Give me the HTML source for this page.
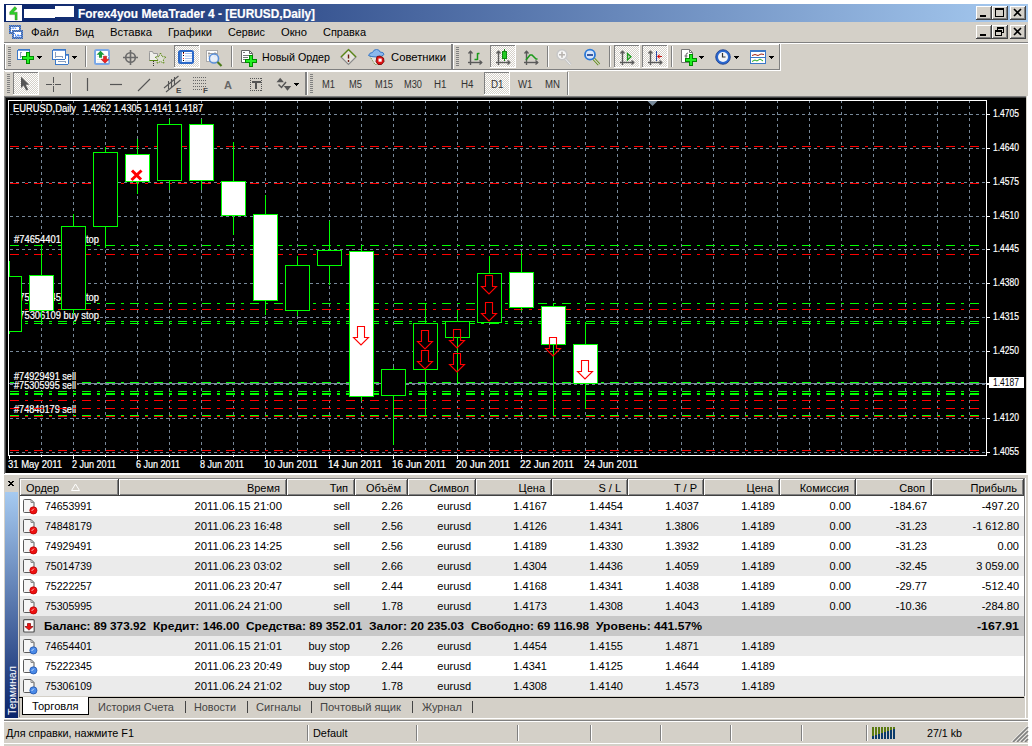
<!DOCTYPE html><html><head><meta charset="utf-8"><style>html,body{margin:0;padding:0;width:1032px;height:746px;overflow:hidden;background:#fff;font-family:"Liberation Sans",sans-serif}</style></head><body><svg width="1032" height="746" viewBox="0 0 1032 746" shape-rendering="crispEdges" font-family="Liberation Sans" style="position:absolute;left:0;top:0">
<defs>
<linearGradient id="tg" x1="0" y1="0" x2="1" y2="0"><stop offset="0" stop-color="#0a246a"/><stop offset="1" stop-color="#a6caf0"/></linearGradient>
<linearGradient id="vg" x1="0" y1="0" x2="0" y2="1"><stop offset="0" stop-color="#a6caf0"/><stop offset="1" stop-color="#0a246a"/></linearGradient>
<pattern id="dith" x="0" y="0" width="2" height="2" patternUnits="userSpaceOnUse"><rect width="2" height="2" fill="#d4d0c8"/><rect width="1" height="1" fill="#ffffff"/><rect x="1" y="1" width="1" height="1" fill="#ffffff"/></pattern>
<pattern id="chk" x="0" y="0" width="2" height="2" patternUnits="userSpaceOnUse"><rect width="2" height="2" fill="#4a8af8"/><rect width="1" height="1" fill="#5a6a80"/><rect x="1" y="1" width="1" height="1" fill="#5a6a80"/></pattern>
<style>text[fill="#ffffff"]{stroke:#fff;stroke-width:0.2}</style>
</defs>
<rect x="0" y="0" width="1032" height="746" fill="#ffffff" />
<rect x="4" y="22" width="1024" height="724" fill="#d4d0c8" />
<rect x="4" y="4" width="1024" height="18" fill="url(#tg)" />
<rect x="6" y="5" width="16" height="16" fill="#ffffff" />
<path d="M14.8,6.5 L17,8.7 L13.3,12.2 H17.2 V20 H15 V14.6 H9.7 V12 Z" fill="#2ad02a" stroke="#3a5a10" stroke-width="0.35" shape-rendering="auto"/>
<path d="M24,9 H55 V6 H74 V17 H55 V18 H24 Z" fill="#ffffff"/>
<text x="78" y="18" font-size="12.5" fill="#ffffff" font-weight="bold" textLength="237" lengthAdjust="spacingAndGlyphs" >Forex4you MetaTrader 4 - [EURUSD,Daily]</text>
<rect x="976" y="6" width="16" height="14" fill="#d4d0c8" />
<line x1="976" y1="6.5" x2="991" y2="6.5" stroke="#ffffff"/>
<line x1="976.5" y1="6" x2="976.5" y2="19" stroke="#ffffff"/>
<line x1="976" y1="19.5" x2="992" y2="19.5" stroke="#404040"/>
<line x1="991.5" y1="6" x2="991.5" y2="20" stroke="#404040"/>
<line x1="977" y1="18.5" x2="991" y2="18.5" stroke="#808080"/>
<line x1="990.5" y1="7" x2="990.5" y2="19" stroke="#808080"/>
<rect x="980" y="15" width="6" height="2" fill="#000" />
<rect x="992" y="6" width="16" height="14" fill="#d4d0c8" />
<line x1="992" y1="6.5" x2="1007" y2="6.5" stroke="#ffffff"/>
<line x1="992.5" y1="6" x2="992.5" y2="19" stroke="#ffffff"/>
<line x1="992" y1="19.5" x2="1008" y2="19.5" stroke="#404040"/>
<line x1="1007.5" y1="6" x2="1007.5" y2="20" stroke="#404040"/>
<line x1="993" y1="18.5" x2="1007" y2="18.5" stroke="#808080"/>
<line x1="1006.5" y1="7" x2="1006.5" y2="19" stroke="#808080"/>
<rect x="995.5" y="8.5" width="8" height="8" fill="none" stroke="#000"/>
<rect x="995" y="8" width="9" height="2" fill="#000" />
<rect x="1010" y="6" width="16" height="14" fill="#d4d0c8" />
<line x1="1010" y1="6.5" x2="1025" y2="6.5" stroke="#ffffff"/>
<line x1="1010.5" y1="6" x2="1010.5" y2="19" stroke="#ffffff"/>
<line x1="1010" y1="19.5" x2="1026" y2="19.5" stroke="#404040"/>
<line x1="1025.5" y1="6" x2="1025.5" y2="20" stroke="#404040"/>
<line x1="1011" y1="18.5" x2="1025" y2="18.5" stroke="#808080"/>
<line x1="1024.5" y1="7" x2="1024.5" y2="19" stroke="#808080"/>
<path d="M1014,9 L1021,16 M1021,9 L1014,16" stroke="#000" stroke-width="1.6" shape-rendering="auto"/>
<rect x="976" y="25" width="16" height="14" fill="#d4d0c8" />
<line x1="976" y1="25.5" x2="991" y2="25.5" stroke="#ffffff"/>
<line x1="976.5" y1="25" x2="976.5" y2="38" stroke="#ffffff"/>
<line x1="976" y1="38.5" x2="992" y2="38.5" stroke="#404040"/>
<line x1="991.5" y1="25" x2="991.5" y2="39" stroke="#404040"/>
<line x1="977" y1="37.5" x2="991" y2="37.5" stroke="#808080"/>
<line x1="990.5" y1="26" x2="990.5" y2="38" stroke="#808080"/>
<rect x="980" y="34" width="6" height="2" fill="#000" />
<rect x="992" y="25" width="16" height="14" fill="#d4d0c8" />
<line x1="992" y1="25.5" x2="1007" y2="25.5" stroke="#ffffff"/>
<line x1="992.5" y1="25" x2="992.5" y2="38" stroke="#ffffff"/>
<line x1="992" y1="38.5" x2="1008" y2="38.5" stroke="#404040"/>
<line x1="1007.5" y1="25" x2="1007.5" y2="39" stroke="#404040"/>
<line x1="993" y1="37.5" x2="1007" y2="37.5" stroke="#808080"/>
<line x1="1006.5" y1="26" x2="1006.5" y2="38" stroke="#808080"/>
<rect x="997.5" y="27.5" width="6" height="5" fill="none" stroke="#000"/>
<rect x="997" y="27" width="7" height="2" fill="#000" />
<rect x="995" y="30" width="7" height="6" fill="#d4d0c8" />
<rect x="995.5" y="30.5" width="6" height="5" fill="none" stroke="#000"/>
<rect x="995" y="30" width="7" height="2" fill="#000" />
<rect x="1010" y="25" width="16" height="14" fill="#d4d0c8" />
<line x1="1010" y1="25.5" x2="1025" y2="25.5" stroke="#ffffff"/>
<line x1="1010.5" y1="25" x2="1010.5" y2="38" stroke="#ffffff"/>
<line x1="1010" y1="38.5" x2="1026" y2="38.5" stroke="#404040"/>
<line x1="1025.5" y1="25" x2="1025.5" y2="39" stroke="#404040"/>
<line x1="1011" y1="37.5" x2="1025" y2="37.5" stroke="#808080"/>
<line x1="1024.5" y1="26" x2="1024.5" y2="38" stroke="#808080"/>
<path d="M1014,28 L1021,35 M1021,28 L1014,35" stroke="#000" stroke-width="1.6" shape-rendering="auto"/>
<rect x="9" y="25" width="12" height="9" fill="url(#chk)" />
<rect x="11" y="27" width="8" height="5" fill="#ffffff" />
<rect x="12" y="30" width="11" height="9" fill="url(#chk)" />
<rect x="14" y="32" width="7" height="5" fill="#ffffff" />
<g shape-rendering="auto"><path d="M14,33 l1.5,1.5 v1.5 l1,1 1.5,-2.5 1,2 1.2,-1.5 1,1.5" stroke="#4a8af8" fill="none" stroke-width="1"/><path d="M11.5,29 l1.5,-1.5 1,1.5 M15,27.5 l1,1.5" stroke="#4a8af8" fill="none"/></g>
<text x="31" y="36" font-size="11" fill="#000" textLength="28" lengthAdjust="spacingAndGlyphs" >Файл</text>
<text x="75" y="36" font-size="11" fill="#000" textLength="19" lengthAdjust="spacingAndGlyphs" >Вид</text>
<text x="110" y="36" font-size="11" fill="#000" textLength="42" lengthAdjust="spacingAndGlyphs" >Вставка</text>
<text x="168" y="36" font-size="11" fill="#000" textLength="44" lengthAdjust="spacingAndGlyphs" >Графики</text>
<text x="228" y="36" font-size="11" fill="#000" textLength="37" lengthAdjust="spacingAndGlyphs" >Сервис</text>
<text x="281" y="36" font-size="11" fill="#000" textLength="26" lengthAdjust="spacingAndGlyphs" >Окно</text>
<text x="323" y="36" font-size="11" fill="#000" textLength="43" lengthAdjust="spacingAndGlyphs" >Справка</text>
<line x1="4" y1="42.5" x2="1028" y2="42.5" stroke="#808080"/>
<line x1="4" y1="43.5" x2="1028" y2="43.5" stroke="#ffffff"/>
<rect x="4" y="44" width="1024" height="25" fill="#d4d0c8" />
<line x1="5" y1="44.5" x2="451" y2="44.5" stroke="#ffffff"/>
<line x1="4.5" y1="44" x2="4.5" y2="70" stroke="#808080"/>
<line x1="5.5" y1="44" x2="5.5" y2="69" stroke="#ffffff"/>
<line x1="4" y1="69.5" x2="453" y2="69.5" stroke="#808080"/>
<line x1="451.5" y1="44" x2="451.5" y2="70" stroke="#808080"/>
<line x1="452.5" y1="44" x2="452.5" y2="70" stroke="#808080"/>
<line x1="453" y1="44.5" x2="780" y2="44.5" stroke="#ffffff"/>
<line x1="453.5" y1="44" x2="453.5" y2="69" stroke="#ffffff"/>
<line x1="453" y1="69.5" x2="780" y2="69.5" stroke="#808080"/>
<line x1="779.5" y1="44" x2="779.5" y2="70" stroke="#808080"/>
<line x1="780.5" y1="44" x2="780.5" y2="71" stroke="#ffffff"/>
<line x1="4" y1="70.5" x2="781" y2="70.5" stroke="#ffffff"/>
<rect x="8" y="47" width="3" height="1" fill="#808080" />
<rect x="8" y="49" width="3" height="1" fill="#808080" />
<rect x="8" y="51" width="3" height="1" fill="#808080" />
<rect x="8" y="53" width="3" height="1" fill="#808080" />
<rect x="8" y="55" width="3" height="1" fill="#808080" />
<rect x="8" y="57" width="3" height="1" fill="#808080" />
<rect x="8" y="59" width="3" height="1" fill="#808080" />
<rect x="8" y="61" width="3" height="1" fill="#808080" />
<rect x="8" y="63" width="3" height="1" fill="#808080" />
<rect x="8" y="65" width="3" height="1" fill="#808080" />
<rect x="17.5" y="49.5" width="12" height="10" rx="1.5" fill="#fff" stroke="#3a78c8"/>
<rect x="18" y="50" width="11" height="1" fill="#6a9ae0" />
<path d="M20.5,51.5 v6 M19.5,52.5 h2 M19.5,56.5 h2" stroke="#8aa0c0" fill="none"/>
<rect x="26" y="52" width="4" height="12" fill="#008a00" />
<rect x="22" y="56" width="12" height="4" fill="#008a00" />
<rect x="27" y="53" width="2" height="10" fill="#22ee22" />
<rect x="23" y="57" width="10" height="2" fill="#22ee22" />
<rect x="37" y="56" width="5" height="1" fill="#000" />
<rect x="38" y="57" width="3" height="1" fill="#000" />
<rect x="39" y="58" width="1" height="1" fill="#000" />
<rect x="55.5" y="54.5" width="13" height="10" rx="1.5" fill="#fff" stroke="#3a78c8"/>
<rect x="56" y="55" width="12" height="1" fill="#6a9ae0" />
<rect x="52.5" y="49.5" width="13" height="10" rx="1.5" fill="#fff" stroke="#3a78c8"/>
<rect x="53" y="50" width="12" height="1" fill="#6a9ae0" />
<path d="M55.5,51.5 v6 M55,56.5 h8 M62.5,55.5 v2 M58,61.5 h8 M65.5,60.5 v2" stroke="#8aa0c0" fill="none"/>
<rect x="72" y="56" width="5" height="1" fill="#000" />
<rect x="73" y="57" width="3" height="1" fill="#000" />
<rect x="74" y="58" width="1" height="1" fill="#000" />
<line x1="85.5" y1="46" x2="85.5" y2="67" stroke="#808080"/>
<line x1="86.5" y1="46" x2="86.5" y2="67" stroke="#ffffff"/>
<g shape-rendering="auto">
<rect x="95" y="50" width="14" height="14" rx="1.5" fill="#fff" stroke="#7aa8e8" stroke-width="2"/><path d="M97,56.5 h12 M97,59.5 h12 M97,62 h12" stroke="#e4e8ec"/><path d="M100.5,50.8 l-4,4 h2.5 v3 h3 v-3 h2.5 z" fill="#1a9a3a"/><path d="M105,63.2 l4,-4 h-2.5 v-3 h-3 v3 h-2.5 z" fill="#ee2020" stroke="#a01010" stroke-width="0.5"/>
<circle cx="130.5" cy="57.5" r="4.8" fill="none" stroke="#6a6a6a" stroke-width="1.6"/><path d="M130.5,50 v15 M123,57.5 h15" stroke="#6a6a6a" stroke-width="1.6"/>
<path d="M149.5,52.5 v8 h8 v-7 h-4 l-1,-2 h-3 z" fill="#eeeeea" stroke="#999"/><path d="M149.5,60.5 h8" stroke="#5a8a10"/><path d="M160.5,53 l1.7,3.6 3.8,0.4 -2.8,2.6 0.8,3.8 -3.5,-2 -3.5,2 0.8,-3.8 -2.8,-2.6 3.8,-0.4 z" fill="#e0e0d8" stroke="#5a8a10" stroke-dasharray="1.2 0.8"/><path d="M153.5,61 v5" stroke="#333" stroke-dasharray="1 1"/>
</g>
<rect x="174" y="45" width="26" height="23" fill="url(#dith)"/>
<line x1="174" y1="45.5" x2="200" y2="45.5" stroke="#808080"/>
<line x1="174.5" y1="45" x2="174.5" y2="68" stroke="#808080"/>
<line x1="174" y1="67.5" x2="200" y2="67.5" stroke="#ffffff"/>
<line x1="199.5" y1="45" x2="199.5" y2="68" stroke="#ffffff"/>
<g shape-rendering="auto"><rect x="179" y="51" width="14" height="12" rx="1.5" fill="#fff" stroke="#2a68c8" stroke-width="2"/><rect x="180" y="52" width="2" height="10" fill="#5a8fd8"/><path d="M185,53.5 h7 M185,56 h7 M185,58.5 h7 M185,61 h7" stroke="#a8c4f0"/></g>
<rect x="183" y="52" width="1" height="1" fill="#000" />
<rect x="183" y="53" width="1" height="1" fill="#e02020" />
<rect x="183" y="55" width="1" height="1" fill="#000" />
<rect x="183" y="58" width="1" height="1" fill="#e02020" />
<rect x="183" y="60" width="1" height="1" fill="#000" />
<g shape-rendering="auto">
<rect x="206.5" y="50.5" width="11" height="11" fill="#fff" stroke="#aaa"/><path d="M209,52 v5 M215,52 v5 M208,53.5 h9" stroke="#888" stroke-width="0.8"/><circle cx="214" cy="58.5" r="4.6" fill="#e4ecf8" fill-opacity="0.85" stroke="#5a8fd8" stroke-width="1.5"/><path d="M217.5,62 l4,4" stroke="#4a7a1a" stroke-width="2.2"/>
</g>
<line x1="231.5" y1="46" x2="231.5" y2="67" stroke="#808080"/>
<line x1="232.5" y1="46" x2="232.5" y2="67" stroke="#ffffff"/>
<g shape-rendering="auto">
<path d="M241.5,50.5 h8 l3,3 v9 h-11 z" fill="#fff" stroke="#666" stroke-linejoin="round"/><path d="M249.5,50.5 v3 h3" fill="none" stroke="#666"/><path d="M243,52.5 h2 M243,55.5 h6 M243,57.5 h5 M243,59.5 h3" stroke="#777"/>
</g>
<rect x="249" y="55" width="4" height="12" fill="#008a00" />
<rect x="245" y="59" width="12" height="4" fill="#008a00" />
<rect x="250" y="56" width="2" height="10" fill="#22ee22" />
<rect x="246" y="60" width="10" height="2" fill="#22ee22" />
<text x="262" y="61" font-size="11" fill="#000" textLength="68" lengthAdjust="spacingAndGlyphs" >Новый Ордер</text>
<g shape-rendering="auto">
<path d="M348.5,49.5 L356,57 L348.5,64.5 L341,57 Z" fill="#e6e4de" stroke="#8a8a8a" stroke-width="1.2"/><path d="M341,57 L348.5,49.5 L356,57" fill="none" stroke="#5a8a10" stroke-width="1.2"/><path d="M348.5,54.5 v4" stroke="#6a1a10" stroke-width="1.4"/><path d="M348.5,60 v2" stroke="#6a1a10" stroke-width="1.4"/>
<path d="M370,56.5 h12 l-5,8 h-2 z" fill="#e4e4e0" stroke="#6a8a30" stroke-dasharray="1 1"/><path d="M368.5,55.5 q1,-3 4,-3 q1,-3 4,-3 q3,0 3.5,2.5 q4,0 4,2.5 q-2,2.5 -7,2.5 q-6,0 -8.5,-1.5 z" fill="#8ab8ec" stroke="#3a78c8"/><path d="M377,56.5 l3,-0.5 3.5,2 0.5,3.5 -2.5,3 -3.5,0 -2,-3 z" fill="#e01010" stroke="#801010"/><rect x="378.5" y="58.5" width="3.2" height="3.2" fill="#fff"/>
</g>
<text x="391" y="61" font-size="11" fill="#000" textLength="55" lengthAdjust="spacingAndGlyphs" >Советники</text>
<rect x="456" y="47" width="3" height="1" fill="#808080" />
<rect x="456" y="49" width="3" height="1" fill="#808080" />
<rect x="456" y="51" width="3" height="1" fill="#808080" />
<rect x="456" y="53" width="3" height="1" fill="#808080" />
<rect x="456" y="55" width="3" height="1" fill="#808080" />
<rect x="456" y="57" width="3" height="1" fill="#808080" />
<rect x="456" y="59" width="3" height="1" fill="#808080" />
<rect x="456" y="61" width="3" height="1" fill="#808080" />
<rect x="456" y="63" width="3" height="1" fill="#808080" />
<rect x="456" y="65" width="3" height="1" fill="#808080" />
<g shape-rendering="auto" stroke="#5a5a5a" fill="none" stroke-width="1.4"><path d="M470.5,51 V65"/><path d="M468,62.5 H482"/><path d="M468.5,53.5 l2,-2.2 2,2.2 M479.5,60.5 l2.2,2 -2.2,2"/></g>
<path d="M477.5,53 v7 M477.5,53.5 h2 M474.5,59.5 h3" stroke="#1a9a1a" stroke-width="1.5" fill="none" shape-rendering="auto"/>
<rect x="490" y="45" width="26" height="23" fill="url(#dith)"/>
<line x1="490" y1="45.5" x2="516" y2="45.5" stroke="#808080"/>
<line x1="490.5" y1="45" x2="490.5" y2="68" stroke="#808080"/>
<line x1="490" y1="67.5" x2="516" y2="67.5" stroke="#ffffff"/>
<line x1="515.5" y1="45" x2="515.5" y2="68" stroke="#ffffff"/>
<g shape-rendering="auto" stroke="#5a5a5a" fill="none" stroke-width="1.4"><path d="M498.5,51 V65"/><path d="M496,62.5 H510"/><path d="M496.5,53.5 l2,-2.2 2,2.2 M507.5,60.5 l2.2,2 -2.2,2"/></g>
<path d="M504.5,49 v12" stroke="#118811" stroke-width="1.2"/><rect x="502.5" y="51.5" width="4" height="7" fill="#22cc22" stroke="#118811"/>
<g shape-rendering="auto" stroke="#5a5a5a" fill="none" stroke-width="1.4"><path d="M526.5,51 V65"/><path d="M524,62.5 H538"/><path d="M524.5,53.5 l2,-2.2 2,2.2 M535.5,60.5 l2.2,2 -2.2,2"/></g>
<path d="M526,60 l4,-5 h2 l4,4 h1.5" stroke="#1a9a1a" stroke-width="1.5" fill="none" shape-rendering="auto"/>
<line x1="547.5" y1="46" x2="547.5" y2="67" stroke="#808080"/>
<line x1="548.5" y1="46" x2="548.5" y2="67" stroke="#ffffff"/>
<g shape-rendering="auto">
<path d="M565,58.5 l5.5,6" stroke="#c8c8c8" stroke-width="3"/><path d="M565,58.5 l5.5,6" stroke="#f0f0f0" stroke-width="1"/><circle cx="562" cy="54.7" r="5" fill="#f6f6f6" stroke="#c8c8c8" stroke-width="1.6"/><path d="M559,54.7 h6 M562,51.7 v6" stroke="#b8b4b0" stroke-width="1.6"/>
<path d="M593.5,58.5 l5.5,6" stroke="#5a8a10" stroke-width="3"/><path d="M593.5,58.5 l5.5,6" stroke="#d4d0c8" stroke-width="1.2"/><circle cx="590" cy="54.7" r="5" fill="#d8e6fa" stroke="#2a78d8" stroke-width="1.8"/><path d="M587,55 h6" stroke="#3a5aa0" stroke-width="2"/>
</g>
<line x1="609.5" y1="46" x2="609.5" y2="67" stroke="#808080"/>
<line x1="610.5" y1="46" x2="610.5" y2="67" stroke="#ffffff"/>
<rect x="614" y="45" width="26" height="23" fill="url(#dith)"/>
<line x1="614" y1="45.5" x2="640" y2="45.5" stroke="#808080"/>
<line x1="614.5" y1="45" x2="614.5" y2="68" stroke="#808080"/>
<line x1="614" y1="67.5" x2="640" y2="67.5" stroke="#ffffff"/>
<line x1="639.5" y1="45" x2="639.5" y2="68" stroke="#ffffff"/>
<rect x="642" y="45" width="26" height="23" fill="url(#dith)"/>
<line x1="642" y1="45.5" x2="668" y2="45.5" stroke="#808080"/>
<line x1="642.5" y1="45" x2="642.5" y2="68" stroke="#808080"/>
<line x1="642" y1="67.5" x2="668" y2="67.5" stroke="#ffffff"/>
<line x1="667.5" y1="45" x2="667.5" y2="68" stroke="#ffffff"/>
<g shape-rendering="auto" stroke="#5a5a5a" fill="none" stroke-width="1.4"><path d="M622.5,51 V65"/><path d="M620,62.5 H634"/><path d="M620.5,53.5 l2,-2.2 2,2.2 M631.5,60.5 l2.2,2 -2.2,2"/></g>
<path d="M627.5,53.5 v6.5 l3.5,-3.2 z" fill="#d8d8d0" stroke="#1a9a1a" stroke-width="1.3" shape-rendering="auto"/>
<g shape-rendering="auto" stroke="#5a5a5a" fill="none" stroke-width="1.4"><path d="M650.5,51 V65"/><path d="M648,62.5 H662"/><path d="M648.5,53.5 l2,-2.2 2,2.2 M659.5,60.5 l2.2,2 -2.2,2"/></g>
<path d="M656.5,51 v10" stroke="#2a4aa8" stroke-width="1.4"/><path d="M662,56.5 h-4" stroke="#c01010" stroke-width="1.4"/><path d="M657,56.5 l2.5,-2.5 v5 z" fill="#e01010" shape-rendering="auto"/>
<line x1="671.5" y1="46" x2="671.5" y2="67" stroke="#808080"/>
<line x1="672.5" y1="46" x2="672.5" y2="67" stroke="#ffffff"/>
<g shape-rendering="auto">
<path d="M681.5,49.5 h8 l3,3 v10 h-11 z" fill="#fff" stroke="#777"/><path d="M689.5,49.5 v3 h3" fill="none" stroke="#777"/><path d="M686,60 v-5 q0,-2 2,-2 M684.5,56 h3" stroke="#666" fill="none"/>
<circle cx="723" cy="57" r="7.3" fill="#2a68d0" stroke="#1a3a88" stroke-width="0.8"/><circle cx="723" cy="57" r="5" fill="#f2f4f8"/><path d="M722.5,53 v4 h3" stroke="#333" stroke-width="1.2" fill="none"/>
</g>
<rect x="750" y="50" width="16" height="14" fill="#3a78c8" />
<rect x="751" y="52" width="14" height="5" fill="#fff" />
<rect x="751" y="58" width="14" height="5" fill="#fff" />
<g shape-rendering="auto"><path d="M752,55.5 l3,-1 3,1 3,-1.5 3,0.5" stroke="#a02010" fill="none"/><path d="M752,61.5 l3,-1.5 2,1 3,-2 3,2" stroke="#22aa22" fill="none"/></g>
<rect x="689" y="54" width="4" height="12" fill="#008a00" />
<rect x="685" y="58" width="12" height="4" fill="#008a00" />
<rect x="690" y="55" width="2" height="10" fill="#22ee22" />
<rect x="686" y="59" width="10" height="2" fill="#22ee22" />
<rect x="699" y="56" width="5" height="1" fill="#000" />
<rect x="700" y="57" width="3" height="1" fill="#000" />
<rect x="701" y="58" width="1" height="1" fill="#000" />
<rect x="734" y="56" width="5" height="1" fill="#000" />
<rect x="735" y="57" width="3" height="1" fill="#000" />
<rect x="736" y="58" width="1" height="1" fill="#000" />
<rect x="769" y="56" width="5" height="1" fill="#000" />
<rect x="770" y="57" width="3" height="1" fill="#000" />
<rect x="771" y="58" width="1" height="1" fill="#000" />
<rect x="4" y="71" width="1024" height="25" fill="#d4d0c8" />
<line x1="5" y1="71.5" x2="306" y2="71.5" stroke="#ffffff"/>
<line x1="306" y1="71.5" x2="567" y2="71.5" stroke="#ffffff"/>
<rect x="7" y="74" width="3" height="1" fill="#808080" />
<rect x="7" y="76" width="3" height="1" fill="#808080" />
<rect x="7" y="78" width="3" height="1" fill="#808080" />
<rect x="7" y="80" width="3" height="1" fill="#808080" />
<rect x="7" y="82" width="3" height="1" fill="#808080" />
<rect x="7" y="84" width="3" height="1" fill="#808080" />
<rect x="7" y="86" width="3" height="1" fill="#808080" />
<rect x="7" y="88" width="3" height="1" fill="#808080" />
<rect x="7" y="90" width="3" height="1" fill="#808080" />
<rect x="7" y="92" width="3" height="1" fill="#808080" />
<rect x="13" y="72" width="26" height="23" fill="url(#dith)"/>
<line x1="13" y1="72.5" x2="39" y2="72.5" stroke="#808080"/>
<line x1="13.5" y1="72" x2="13.5" y2="95" stroke="#808080"/>
<line x1="13" y1="94.5" x2="39" y2="94.5" stroke="#ffffff"/>
<line x1="38.5" y1="72" x2="38.5" y2="95" stroke="#ffffff"/>
<g shape-rendering="auto">
<path d="M21,76.8 V88 l2.6,-2.4 2.6,5 2,-1 -2.5,-4.8 h3.5 z" fill="#555"/>
</g>
<rect x="53" y="77" width="1" height="6" fill="#555" />
<rect x="53" y="86" width="1" height="6" fill="#555" />
<rect x="46" y="84" width="6" height="1" fill="#555" />
<rect x="55" y="84" width="6" height="1" fill="#555" />
<rect x="53" y="84" width="1" height="1" fill="#555" />
<g shape-rendering="auto" opacity="0.6"><path d="M53.5,77 v6 M53.5,86 v6 M46,84.5 h6 M55,84.5 h6" stroke="#555" stroke-width="0.6"/></g>
<line x1="70.5" y1="73" x2="70.5" y2="94" stroke="#808080"/>
<line x1="71.5" y1="73" x2="71.5" y2="94" stroke="#ffffff"/>
<g shape-rendering="auto">
<path d="M87.5,78 v13" stroke="#555" stroke-width="1.2"/><path d="M110,84.5 h12" stroke="#555" stroke-width="1.2"/><path d="M138,91 l12,-12" stroke="#555" stroke-width="1.1"/>
<path d="M164,88 L178.5,76 M166,92 L180.5,80 M168.5,81 v8 M171.5,79 v8 M174.5,77 v8" stroke="#555" stroke-width="1.1" fill="none"/>
</g>
<rect x="193" y="77" width="1" height="1" fill="#666" />
<rect x="195" y="77" width="1" height="1" fill="#666" />
<rect x="197" y="77" width="1" height="1" fill="#666" />
<rect x="199" y="77" width="1" height="1" fill="#666" />
<rect x="201" y="77" width="1" height="1" fill="#666" />
<rect x="203" y="77" width="1" height="1" fill="#666" />
<rect x="205" y="77" width="1" height="1" fill="#666" />
<rect x="193" y="80" width="1" height="1" fill="#666" />
<rect x="195" y="80" width="1" height="1" fill="#666" />
<rect x="197" y="80" width="1" height="1" fill="#666" />
<rect x="199" y="80" width="1" height="1" fill="#666" />
<rect x="201" y="80" width="1" height="1" fill="#666" />
<rect x="203" y="80" width="1" height="1" fill="#666" />
<rect x="205" y="80" width="1" height="1" fill="#666" />
<rect x="193" y="83" width="1" height="1" fill="#666" />
<rect x="195" y="83" width="1" height="1" fill="#666" />
<rect x="197" y="83" width="1" height="1" fill="#666" />
<rect x="199" y="83" width="1" height="1" fill="#666" />
<rect x="201" y="83" width="1" height="1" fill="#666" />
<rect x="203" y="83" width="1" height="1" fill="#666" />
<rect x="205" y="83" width="1" height="1" fill="#666" />
<rect x="193" y="86" width="1" height="1" fill="#666" />
<rect x="195" y="86" width="1" height="1" fill="#666" />
<rect x="197" y="86" width="1" height="1" fill="#666" />
<rect x="199" y="86" width="1" height="1" fill="#666" />
<rect x="201" y="86" width="1" height="1" fill="#666" />
<rect x="203" y="86" width="1" height="1" fill="#666" />
<rect x="205" y="86" width="1" height="1" fill="#666" />
<rect x="193" y="89" width="1" height="1" fill="#666" />
<rect x="195" y="89" width="1" height="1" fill="#666" />
<rect x="197" y="89" width="1" height="1" fill="#666" />
<rect x="199" y="89" width="1" height="1" fill="#666" />
<rect x="201" y="89" width="1" height="1" fill="#666" />
<text x="176" y="93" font-size="8" fill="#444" font-weight="bold" >E</text>
<text x="203" y="93" font-size="8" fill="#444" font-weight="bold" >F</text>
<text x="224" y="89" font-size="11" fill="#666" font-weight="bold" >A</text>
<rect x="250" y="78" width="1" height="1" fill="#555" />
<rect x="250" y="90" width="1" height="1" fill="#555" />
<rect x="252" y="78" width="1" height="1" fill="#555" />
<rect x="252" y="90" width="1" height="1" fill="#555" />
<rect x="254" y="78" width="1" height="1" fill="#555" />
<rect x="254" y="90" width="1" height="1" fill="#555" />
<rect x="256" y="78" width="1" height="1" fill="#555" />
<rect x="256" y="90" width="1" height="1" fill="#555" />
<rect x="258" y="78" width="1" height="1" fill="#555" />
<rect x="258" y="90" width="1" height="1" fill="#555" />
<rect x="260" y="78" width="1" height="1" fill="#555" />
<rect x="260" y="90" width="1" height="1" fill="#555" />
<rect x="250" y="78" width="1" height="1" fill="#555" />
<rect x="261" y="78" width="1" height="1" fill="#555" />
<rect x="250" y="80" width="1" height="1" fill="#555" />
<rect x="261" y="80" width="1" height="1" fill="#555" />
<rect x="250" y="82" width="1" height="1" fill="#555" />
<rect x="261" y="82" width="1" height="1" fill="#555" />
<rect x="250" y="84" width="1" height="1" fill="#555" />
<rect x="261" y="84" width="1" height="1" fill="#555" />
<rect x="250" y="86" width="1" height="1" fill="#555" />
<rect x="261" y="86" width="1" height="1" fill="#555" />
<rect x="250" y="88" width="1" height="1" fill="#555" />
<rect x="261" y="88" width="1" height="1" fill="#555" />
<rect x="250" y="90" width="1" height="1" fill="#555" />
<rect x="261" y="90" width="1" height="1" fill="#555" />
<rect x="252" y="81" width="9" height="2" fill="#555" />
<rect x="255" y="81" width="2" height="8" fill="#555" />
<g shape-rendering="auto" fill="#555"><path d="M276.5,82.2 l3.7,-4.4 3.7,4.4 z"/><path d="M283.8,86 h7.4 l-3.7,4.7 z"/><path d="M278.5,84.5 l3,3 4.5,-5.5" stroke="#555" stroke-width="1.5" fill="none"/></g>
<rect x="294" y="83" width="5" height="1" fill="#000" />
<rect x="295" y="84" width="3" height="1" fill="#000" />
<rect x="296" y="85" width="1" height="1" fill="#000" />
<line x1="305.5" y1="72" x2="305.5" y2="95" stroke="#808080"/>
<line x1="306.5" y1="72" x2="306.5" y2="95" stroke="#808080"/>
<line x1="307.5" y1="72" x2="307.5" y2="95" stroke="#ffffff"/>
<rect x="310" y="74" width="3" height="1" fill="#808080" />
<rect x="310" y="76" width="3" height="1" fill="#808080" />
<rect x="310" y="78" width="3" height="1" fill="#808080" />
<rect x="310" y="80" width="3" height="1" fill="#808080" />
<rect x="310" y="82" width="3" height="1" fill="#808080" />
<rect x="310" y="84" width="3" height="1" fill="#808080" />
<rect x="310" y="86" width="3" height="1" fill="#808080" />
<rect x="310" y="88" width="3" height="1" fill="#808080" />
<rect x="310" y="90" width="3" height="1" fill="#808080" />
<rect x="310" y="92" width="3" height="1" fill="#808080" />
<rect x="484" y="72" width="26" height="23" fill="url(#dith)"/>
<line x1="484" y1="72.5" x2="510" y2="72.5" stroke="#808080"/>
<line x1="484.5" y1="72" x2="484.5" y2="95" stroke="#808080"/>
<line x1="484" y1="94.5" x2="510" y2="94.5" stroke="#ffffff"/>
<line x1="509.5" y1="72" x2="509.5" y2="95" stroke="#ffffff"/>
<text x="322" y="88" font-size="10" fill="#333" textLength="13" lengthAdjust="spacingAndGlyphs" >M1</text>
<text x="349" y="88" font-size="10" fill="#333" textLength="13" lengthAdjust="spacingAndGlyphs" >M5</text>
<text x="375" y="88" font-size="10" fill="#333" textLength="18" lengthAdjust="spacingAndGlyphs" >M15</text>
<text x="404" y="88" font-size="10" fill="#333" textLength="18" lengthAdjust="spacingAndGlyphs" >M30</text>
<text x="434" y="88" font-size="10" fill="#333" textLength="12.5" lengthAdjust="spacingAndGlyphs" >H1</text>
<text x="461" y="88" font-size="10" fill="#333" textLength="12.5" lengthAdjust="spacingAndGlyphs" >H4</text>
<text x="491" y="88" font-size="10" fill="#333" textLength="12.5" lengthAdjust="spacingAndGlyphs" >D1</text>
<text x="518" y="88" font-size="10" fill="#333" textLength="14.5" lengthAdjust="spacingAndGlyphs" >W1</text>
<text x="545" y="88" font-size="10" fill="#333" textLength="15" lengthAdjust="spacingAndGlyphs" >MN</text>
<line x1="567.5" y1="72" x2="567.5" y2="95" stroke="#808080"/>
<line x1="568.5" y1="72" x2="568.5" y2="95" stroke="#ffffff"/>
<rect x="4" y="96" width="1023" height="1" fill="#808080" />
<rect x="4" y="96" width="1" height="378" fill="#808080" />
<rect x="5" y="97" width="1021" height="376" fill="#000" />
<rect x="5" y="97" width="1021" height="1" fill="#404040" />
<rect x="5" y="97" width="1" height="376" fill="#404040" />
<rect x="1026" y="96" width="1" height="378" fill="#d4d0c8" />
<rect x="1027" y="96" width="1" height="378" fill="#ffffff" />
<rect x="4" y="473" width="1024" height="2" fill="#ffffff" />
<rect x="4" y="473" width="1" height="1" fill="#808080" />
<clipPath id="cc"><rect x="9" y="101" width="977" height="354"/></clipPath>
<line x1="41.5" y1="100" x2="41.5" y2="455" stroke="#778899" stroke-dasharray="3 3" stroke-dashoffset="0"/>
<line x1="73.5" y1="100" x2="73.5" y2="455" stroke="#778899" stroke-dasharray="3 3" stroke-dashoffset="0"/>
<line x1="105.5" y1="100" x2="105.5" y2="455" stroke="#778899" stroke-dasharray="3 3" stroke-dashoffset="0"/>
<line x1="137.5" y1="100" x2="137.5" y2="455" stroke="#778899" stroke-dasharray="3 3" stroke-dashoffset="0"/>
<line x1="169.5" y1="100" x2="169.5" y2="455" stroke="#778899" stroke-dasharray="3 3" stroke-dashoffset="0"/>
<line x1="201.5" y1="100" x2="201.5" y2="455" stroke="#778899" stroke-dasharray="3 3" stroke-dashoffset="0"/>
<line x1="233.5" y1="100" x2="233.5" y2="455" stroke="#778899" stroke-dasharray="3 3" stroke-dashoffset="0"/>
<line x1="265.5" y1="100" x2="265.5" y2="455" stroke="#778899" stroke-dasharray="3 3" stroke-dashoffset="0"/>
<line x1="297.5" y1="100" x2="297.5" y2="455" stroke="#778899" stroke-dasharray="3 3" stroke-dashoffset="0"/>
<line x1="329.5" y1="100" x2="329.5" y2="455" stroke="#778899" stroke-dasharray="3 3" stroke-dashoffset="0"/>
<line x1="361.5" y1="100" x2="361.5" y2="455" stroke="#778899" stroke-dasharray="3 3" stroke-dashoffset="0"/>
<line x1="393.5" y1="100" x2="393.5" y2="455" stroke="#778899" stroke-dasharray="3 3" stroke-dashoffset="0"/>
<line x1="425.5" y1="100" x2="425.5" y2="455" stroke="#778899" stroke-dasharray="3 3" stroke-dashoffset="0"/>
<line x1="457.5" y1="100" x2="457.5" y2="455" stroke="#778899" stroke-dasharray="3 3" stroke-dashoffset="0"/>
<line x1="489.5" y1="100" x2="489.5" y2="455" stroke="#778899" stroke-dasharray="3 3" stroke-dashoffset="0"/>
<line x1="521.5" y1="100" x2="521.5" y2="455" stroke="#778899" stroke-dasharray="3 3" stroke-dashoffset="0"/>
<line x1="553.5" y1="100" x2="553.5" y2="455" stroke="#778899" stroke-dasharray="3 3" stroke-dashoffset="0"/>
<line x1="585.5" y1="100" x2="585.5" y2="455" stroke="#778899" stroke-dasharray="3 3" stroke-dashoffset="0"/>
<line x1="617.5" y1="100" x2="617.5" y2="455" stroke="#778899" stroke-dasharray="3 3" stroke-dashoffset="0"/>
<line x1="649.5" y1="100" x2="649.5" y2="455" stroke="#778899" stroke-dasharray="3 3" stroke-dashoffset="0"/>
<line x1="681.5" y1="100" x2="681.5" y2="455" stroke="#778899" stroke-dasharray="3 3" stroke-dashoffset="0"/>
<line x1="713.5" y1="100" x2="713.5" y2="455" stroke="#778899" stroke-dasharray="3 3" stroke-dashoffset="0"/>
<line x1="745.5" y1="100" x2="745.5" y2="455" stroke="#778899" stroke-dasharray="3 3" stroke-dashoffset="0"/>
<line x1="777.5" y1="100" x2="777.5" y2="455" stroke="#778899" stroke-dasharray="3 3" stroke-dashoffset="0"/>
<line x1="809.5" y1="100" x2="809.5" y2="455" stroke="#778899" stroke-dasharray="3 3" stroke-dashoffset="0"/>
<line x1="841.5" y1="100" x2="841.5" y2="455" stroke="#778899" stroke-dasharray="3 3" stroke-dashoffset="0"/>
<line x1="873.5" y1="100" x2="873.5" y2="455" stroke="#778899" stroke-dasharray="3 3" stroke-dashoffset="0"/>
<line x1="905.5" y1="100" x2="905.5" y2="455" stroke="#778899" stroke-dasharray="3 3" stroke-dashoffset="0"/>
<line x1="937.5" y1="100" x2="937.5" y2="455" stroke="#778899" stroke-dasharray="3 3" stroke-dashoffset="0"/>
<line x1="969.5" y1="100" x2="969.5" y2="455" stroke="#778899" stroke-dasharray="3 3" stroke-dashoffset="0"/>
<line x1="10" y1="114.5" x2="985" y2="114.5" stroke="#778899" stroke-dasharray="3 3" stroke-dashoffset="0"/>
<line x1="10" y1="148.5" x2="985" y2="148.5" stroke="#778899" stroke-dasharray="3 3" stroke-dashoffset="0"/>
<line x1="10" y1="182.5" x2="985" y2="182.5" stroke="#778899" stroke-dasharray="3 3" stroke-dashoffset="0"/>
<line x1="10" y1="216.5" x2="985" y2="216.5" stroke="#778899" stroke-dasharray="3 3" stroke-dashoffset="0"/>
<line x1="10" y1="249.5" x2="985" y2="249.5" stroke="#778899" stroke-dasharray="3 3" stroke-dashoffset="0"/>
<line x1="10" y1="283.5" x2="985" y2="283.5" stroke="#778899" stroke-dasharray="3 3" stroke-dashoffset="0"/>
<line x1="10" y1="317.5" x2="985" y2="317.5" stroke="#778899" stroke-dasharray="3 3" stroke-dashoffset="0"/>
<line x1="10" y1="351.5" x2="985" y2="351.5" stroke="#778899" stroke-dasharray="3 3" stroke-dashoffset="0"/>
<line x1="10" y1="384.5" x2="985" y2="384.5" stroke="#778899" stroke-dasharray="3 3" stroke-dashoffset="0"/>
<line x1="10" y1="418.5" x2="985" y2="418.5" stroke="#778899" stroke-dasharray="3 3" stroke-dashoffset="0"/>
<line x1="10" y1="452.5" x2="985" y2="452.5" stroke="#778899" stroke-dasharray="3 3" stroke-dashoffset="0"/>
<line x1="8" y1="100.5" x2="987" y2="100.5" stroke="#ffffff"/>
<line x1="8" y1="455.5" x2="987" y2="455.5" stroke="#ffffff"/>
<line x1="8.5" y1="100" x2="8.5" y2="456" stroke="#ffffff"/>
<line x1="986.5" y1="100" x2="986.5" y2="456" stroke="#ffffff"/>
<line x1="987" y1="114.5" x2="990" y2="114.5" stroke="#ffffff"/>
<text x="993" y="117" font-size="10" fill="#ffffff" textLength="26" lengthAdjust="spacingAndGlyphs" >1.4705</text>
<line x1="987" y1="148.5" x2="990" y2="148.5" stroke="#ffffff"/>
<text x="993" y="151" font-size="10" fill="#ffffff" textLength="26" lengthAdjust="spacingAndGlyphs" >1.4640</text>
<line x1="987" y1="182.5" x2="990" y2="182.5" stroke="#ffffff"/>
<text x="993" y="185" font-size="10" fill="#ffffff" textLength="26" lengthAdjust="spacingAndGlyphs" >1.4575</text>
<line x1="987" y1="216.5" x2="990" y2="216.5" stroke="#ffffff"/>
<text x="993" y="219" font-size="10" fill="#ffffff" textLength="26" lengthAdjust="spacingAndGlyphs" >1.4510</text>
<line x1="987" y1="249.5" x2="990" y2="249.5" stroke="#ffffff"/>
<text x="993" y="252" font-size="10" fill="#ffffff" textLength="26" lengthAdjust="spacingAndGlyphs" >1.4445</text>
<line x1="987" y1="283.5" x2="990" y2="283.5" stroke="#ffffff"/>
<text x="993" y="286" font-size="10" fill="#ffffff" textLength="26" lengthAdjust="spacingAndGlyphs" >1.4380</text>
<line x1="987" y1="317.5" x2="990" y2="317.5" stroke="#ffffff"/>
<text x="993" y="320" font-size="10" fill="#ffffff" textLength="26" lengthAdjust="spacingAndGlyphs" >1.4315</text>
<line x1="987" y1="351.5" x2="990" y2="351.5" stroke="#ffffff"/>
<text x="993" y="354" font-size="10" fill="#ffffff" textLength="26" lengthAdjust="spacingAndGlyphs" >1.4250</text>
<line x1="987" y1="384.5" x2="990" y2="384.5" stroke="#ffffff"/>
<line x1="987" y1="418.5" x2="990" y2="418.5" stroke="#ffffff"/>
<text x="993" y="421" font-size="10" fill="#ffffff" textLength="26" lengthAdjust="spacingAndGlyphs" >1.4120</text>
<line x1="987" y1="452.5" x2="990" y2="452.5" stroke="#ffffff"/>
<text x="993" y="455" font-size="10" fill="#ffffff" textLength="26" lengthAdjust="spacingAndGlyphs" >1.4055</text>
<line x1="9.5" y1="456" x2="9.5" y2="459" stroke="#ffffff"/>
<text x="8" y="468" font-size="10" fill="#ffffff" textLength="54" lengthAdjust="spacingAndGlyphs" stroke="#fff" stroke-width="0.2">31 May 2011</text>
<line x1="73.5" y1="456" x2="73.5" y2="459" stroke="#ffffff"/>
<text x="72" y="468" font-size="10" fill="#ffffff" textLength="44" lengthAdjust="spacingAndGlyphs" stroke="#fff" stroke-width="0.2">2 Jun 2011</text>
<line x1="137.5" y1="456" x2="137.5" y2="459" stroke="#ffffff"/>
<text x="136" y="468" font-size="10" fill="#ffffff" textLength="44" lengthAdjust="spacingAndGlyphs" stroke="#fff" stroke-width="0.2">6 Jun 2011</text>
<line x1="201.5" y1="456" x2="201.5" y2="459" stroke="#ffffff"/>
<text x="200" y="468" font-size="10" fill="#ffffff" textLength="44" lengthAdjust="spacingAndGlyphs" stroke="#fff" stroke-width="0.2">8 Jun 2011</text>
<line x1="265.5" y1="456" x2="265.5" y2="459" stroke="#ffffff"/>
<text x="264" y="468" font-size="10" fill="#ffffff" textLength="54" lengthAdjust="spacingAndGlyphs" stroke="#fff" stroke-width="0.2">10 Jun 2011</text>
<line x1="329.5" y1="456" x2="329.5" y2="459" stroke="#ffffff"/>
<text x="328" y="468" font-size="10" fill="#ffffff" textLength="54" lengthAdjust="spacingAndGlyphs" stroke="#fff" stroke-width="0.2">14 Jun 2011</text>
<line x1="393.5" y1="456" x2="393.5" y2="459" stroke="#ffffff"/>
<text x="392" y="468" font-size="10" fill="#ffffff" textLength="54" lengthAdjust="spacingAndGlyphs" stroke="#fff" stroke-width="0.2">16 Jun 2011</text>
<line x1="457.5" y1="456" x2="457.5" y2="459" stroke="#ffffff"/>
<text x="456" y="468" font-size="10" fill="#ffffff" textLength="54" lengthAdjust="spacingAndGlyphs" stroke="#fff" stroke-width="0.2">20 Jun 2011</text>
<line x1="521.5" y1="456" x2="521.5" y2="459" stroke="#ffffff"/>
<text x="520" y="468" font-size="10" fill="#ffffff" textLength="54" lengthAdjust="spacingAndGlyphs" stroke="#fff" stroke-width="0.2">22 Jun 2011</text>
<line x1="585.5" y1="456" x2="585.5" y2="459" stroke="#ffffff"/>
<text x="584" y="468" font-size="10" fill="#ffffff" textLength="54" lengthAdjust="spacingAndGlyphs" stroke="#fff" stroke-width="0.2">24 Jun 2011</text>
<line x1="41.5" y1="456" x2="41.5" y2="457" stroke="#ffffff"/>
<line x1="105.5" y1="456" x2="105.5" y2="457" stroke="#ffffff"/>
<line x1="169.5" y1="456" x2="169.5" y2="457" stroke="#ffffff"/>
<line x1="233.5" y1="456" x2="233.5" y2="457" stroke="#ffffff"/>
<line x1="297.5" y1="456" x2="297.5" y2="457" stroke="#ffffff"/>
<line x1="361.5" y1="456" x2="361.5" y2="457" stroke="#ffffff"/>
<line x1="425.5" y1="456" x2="425.5" y2="457" stroke="#ffffff"/>
<line x1="489.5" y1="456" x2="489.5" y2="457" stroke="#ffffff"/>
<line x1="553.5" y1="456" x2="553.5" y2="457" stroke="#ffffff"/>
<line x1="617.5" y1="456" x2="617.5" y2="457" stroke="#ffffff"/>
<g clip-path="url(#cc)">
<line x1="9" y1="383.5" x2="986" y2="383.5" stroke="#778899"/>
<line x1="10" y1="394.5" x2="985" y2="394.5" stroke="#00ff00" stroke-dasharray="9 6 3 6" stroke-dashoffset="0"/>
<line x1="10" y1="245.5" x2="985" y2="245.5" stroke="#ff0000" stroke-dasharray="9 6 3 6" stroke-dashoffset="0"/>
<line x1="10" y1="245.5" x2="985" y2="245.5" stroke="#00ff00" stroke-dasharray="9 6 3 6" stroke-dashoffset="0"/>
<line x1="10" y1="400.5" x2="985" y2="400.5" stroke="#ff0000" stroke-dasharray="9 6 3 6" stroke-dashoffset="0"/>
<rect x="14" y="234" width="86" height="10" fill="#000" />
<text x="14" y="243" font-size="10" fill="#ffffff" textLength="85" lengthAdjust="spacingAndGlyphs" >#74654401 buy stop</text>
<line x1="10" y1="415.5" x2="985" y2="415.5" stroke="#00ff00" stroke-dasharray="9 6 3 6" stroke-dashoffset="0"/>
<line x1="10" y1="303.5" x2="985" y2="303.5" stroke="#ff0000" stroke-dasharray="9 6 3 6" stroke-dashoffset="0"/>
<rect x="14" y="404" width="63" height="10" fill="#000" />
<text x="14" y="413" font-size="10" fill="#ffffff" textLength="62" lengthAdjust="spacingAndGlyphs" >#74848179 sell</text>
<line x1="10" y1="382.5" x2="985" y2="382.5" stroke="#00ff00" stroke-dasharray="9 6 3 6" stroke-dashoffset="0"/>
<line x1="10" y1="309.5" x2="985" y2="309.5" stroke="#ff0000" stroke-dasharray="9 6 3 6" stroke-dashoffset="0"/>
<rect x="14" y="371" width="63" height="10" fill="#000" />
<text x="14" y="380" font-size="10" fill="#ffffff" textLength="62" lengthAdjust="spacingAndGlyphs" >#74929491 sell</text>
<line x1="10" y1="323.5" x2="985" y2="323.5" stroke="#00ff00" stroke-dasharray="9 6 3 6" stroke-dashoffset="0"/>
<line x1="10" y1="254.5" x2="985" y2="254.5" stroke="#ff0000" stroke-dasharray="9 6 3 6" stroke-dashoffset="0"/>
<line x1="10" y1="450.5" x2="985" y2="450.5" stroke="#ff0000" stroke-dasharray="9 6 3 6" stroke-dashoffset="0"/>
<line x1="10" y1="393.5" x2="985" y2="393.5" stroke="#00ff00" stroke-dasharray="9 6 3 6" stroke-dashoffset="0"/>
<line x1="10" y1="303.5" x2="985" y2="303.5" stroke="#ff0000" stroke-dasharray="9 6 3 6" stroke-dashoffset="0"/>
<line x1="10" y1="303.5" x2="985" y2="303.5" stroke="#00ff00" stroke-dasharray="9 6 3 6" stroke-dashoffset="0"/>
<line x1="10" y1="416.5" x2="985" y2="416.5" stroke="#ff0000" stroke-dasharray="9 6 3 6" stroke-dashoffset="0"/>
<line x1="10" y1="146.5" x2="985" y2="146.5" stroke="#ff0000" stroke-dasharray="9 6 3 6" stroke-dashoffset="0"/>
<rect x="14" y="292" width="86" height="10" fill="#000" />
<text x="14" y="301" font-size="10" fill="#ffffff" textLength="85" lengthAdjust="spacingAndGlyphs" >#75222345 buy stop</text>
<line x1="10" y1="391.5" x2="985" y2="391.5" stroke="#00ff00" stroke-dasharray="9 6 3 6" stroke-dashoffset="0"/>
<line x1="10" y1="321.5" x2="985" y2="321.5" stroke="#ff0000" stroke-dasharray="9 6 3 6" stroke-dashoffset="0"/>
<rect x="14" y="380" width="63" height="10" fill="#000" />
<text x="14" y="389" font-size="10" fill="#ffffff" textLength="62" lengthAdjust="spacingAndGlyphs" >#75305995 sell</text>
<line x1="10" y1="321.5" x2="985" y2="321.5" stroke="#00ff00" stroke-dasharray="9 6 3 6" stroke-dashoffset="0"/>
<line x1="10" y1="408.5" x2="985" y2="408.5" stroke="#ff0000" stroke-dasharray="9 6 3 6" stroke-dashoffset="0"/>
<line x1="10" y1="183.5" x2="985" y2="183.5" stroke="#ff0000" stroke-dasharray="9 6 3 6" stroke-dashoffset="0"/>
<rect x="14" y="310" width="86" height="10" fill="#000" />
<text x="14" y="319" font-size="10" fill="#ffffff" textLength="85" lengthAdjust="spacingAndGlyphs" >#75306109 buy stop</text>
<line x1="9.5" y1="261" x2="9.5" y2="334" stroke="#00ff00"/>
<rect x="-3" y="276" width="25" height="56" fill="#00ff00" />
<rect x="-2" y="277" width="23" height="54" fill="#000" />
<line x1="41.5" y1="244" x2="41.5" y2="322" stroke="#00ff00"/>
<rect x="29" y="275" width="25" height="36" fill="#00ff00" />
<rect x="30" y="276" width="23" height="34" fill="#fff" />
<line x1="73.5" y1="214" x2="73.5" y2="314" stroke="#00ff00"/>
<rect x="61" y="226" width="25" height="84" fill="#00ff00" />
<rect x="62" y="227" width="23" height="82" fill="#000" />
<line x1="105.5" y1="147" x2="105.5" y2="248" stroke="#00ff00"/>
<rect x="93" y="152" width="25" height="75" fill="#00ff00" />
<rect x="94" y="153" width="23" height="73" fill="#000" />
<line x1="137.5" y1="139" x2="137.5" y2="194" stroke="#00ff00"/>
<rect x="125" y="154" width="25" height="28" fill="#00ff00" />
<rect x="126" y="155" width="23" height="26" fill="#fff" />
<line x1="169.5" y1="119" x2="169.5" y2="190" stroke="#00ff00"/>
<rect x="157" y="124" width="25" height="57" fill="#00ff00" />
<rect x="158" y="125" width="23" height="55" fill="#000" />
<line x1="201.5" y1="119" x2="201.5" y2="190" stroke="#00ff00"/>
<rect x="189" y="124" width="25" height="57" fill="#00ff00" />
<rect x="190" y="125" width="23" height="55" fill="#fff" />
<line x1="233.5" y1="142" x2="233.5" y2="235" stroke="#00ff00"/>
<rect x="221" y="181" width="25" height="35" fill="#00ff00" />
<rect x="222" y="182" width="23" height="33" fill="#fff" />
<line x1="265.5" y1="195" x2="265.5" y2="315" stroke="#00ff00"/>
<rect x="253" y="214" width="25" height="87" fill="#00ff00" />
<rect x="254" y="215" width="23" height="85" fill="#fff" />
<line x1="297.5" y1="256" x2="297.5" y2="316" stroke="#00ff00"/>
<rect x="285" y="265" width="25" height="46" fill="#00ff00" />
<rect x="286" y="266" width="23" height="44" fill="#000" />
<line x1="329.5" y1="221" x2="329.5" y2="285" stroke="#00ff00"/>
<rect x="317" y="250" width="25" height="16" fill="#00ff00" />
<rect x="318" y="251" width="23" height="14" fill="#000" />
<line x1="361.5" y1="245" x2="361.5" y2="401" stroke="#00ff00"/>
<rect x="349" y="251" width="25" height="146" fill="#00ff00" />
<rect x="350" y="252" width="23" height="144" fill="#fff" />
<line x1="393.5" y1="367" x2="393.5" y2="445" stroke="#00ff00"/>
<rect x="381" y="369" width="25" height="27" fill="#00ff00" />
<rect x="382" y="370" width="23" height="25" fill="#000" />
<line x1="425.5" y1="303" x2="425.5" y2="416" stroke="#00ff00"/>
<rect x="413" y="323" width="25" height="47" fill="#00ff00" />
<rect x="414" y="324" width="23" height="45" fill="#000" />
<line x1="457.5" y1="310" x2="457.5" y2="384" stroke="#00ff00"/>
<rect x="445" y="321" width="25" height="17" fill="#00ff00" />
<rect x="446" y="322" width="23" height="15" fill="#000" />
<line x1="489.5" y1="256" x2="489.5" y2="323" stroke="#00ff00"/>
<rect x="477" y="273" width="25" height="50" fill="#00ff00" />
<rect x="478" y="274" width="23" height="48" fill="#000" />
<line x1="521.5" y1="252" x2="521.5" y2="311" stroke="#00ff00"/>
<rect x="509" y="272" width="25" height="36" fill="#00ff00" />
<rect x="510" y="273" width="23" height="34" fill="#fff" />
<line x1="553.5" y1="304" x2="553.5" y2="416" stroke="#00ff00"/>
<rect x="541" y="306" width="25" height="39" fill="#00ff00" />
<rect x="542" y="307" width="23" height="37" fill="#fff" />
<line x1="585.5" y1="322" x2="585.5" y2="409" stroke="#00ff00"/>
<rect x="573" y="344" width="25" height="40" fill="#00ff00" />
<rect x="574" y="345" width="23" height="38" fill="#fff" />
<path d="M357.5,326.5 H364.5 V337.5 H368.5 L361,345 L353.5,337.5 H357.5 Z" fill="none" stroke="#ff0000" shape-rendering="auto" stroke-width="1.1"/>
<path d="M421.5,330.5 H428.5 V341.5 H432.5 L425,349 L417.5,341.5 H421.5 Z" fill="none" stroke="#ff0000" shape-rendering="auto" stroke-width="1.1"/>
<path d="M421.5,350.5 H428.5 V361.5 H432.5 L425,369 L417.5,361.5 H421.5 Z" fill="none" stroke="#ff0000" shape-rendering="auto" stroke-width="1.1"/>
<path d="M453.5,329.5 H460.5 V340.5 H464.5 L457,348 L449.5,340.5 H453.5 Z" fill="none" stroke="#ff0000" shape-rendering="auto" stroke-width="1.1"/>
<path d="M453.5,353.5 H460.5 V364.5 H464.5 L457,372 L449.5,364.5 H453.5 Z" fill="none" stroke="#ff0000" shape-rendering="auto" stroke-width="1.1"/>
<path d="M485.5,275.5 H492.5 V286.5 H496.5 L489,294 L481.5,286.5 H485.5 Z" fill="none" stroke="#ff0000" shape-rendering="auto" stroke-width="1.1"/>
<path d="M485.5,302.5 H492.5 V313.5 H496.5 L489,321 L481.5,313.5 H485.5 Z" fill="none" stroke="#ff0000" shape-rendering="auto" stroke-width="1.1"/>
<path d="M549.5,337.5 H556.5 V348.5 H560.5 L553,356 L545.5,348.5 H549.5 Z" fill="none" stroke="#ff0000" shape-rendering="auto" stroke-width="1.1"/>
<path d="M581.5,360.5 H588.5 V371.5 H592.5 L585,379 L577.5,371.5 H581.5 Z" fill="none" stroke="#ff0000" shape-rendering="auto" stroke-width="1.1"/>
<path d="M132,170.5 L141,179.5 M141.5,170.5 L131.5,180" stroke="#ff0000" stroke-width="3" shape-rendering="auto"/>
</g>
<rect x="11" y="103" width="193" height="11" fill="#000" />
<text x="13" y="112" font-size="10" fill="#ffffff" textLength="63" lengthAdjust="spacingAndGlyphs" >EURUSD,Daily</text>
<text x="83" y="112" font-size="10" fill="#ffffff" textLength="120" lengthAdjust="spacingAndGlyphs" >1.4262 1.4305 1.4141 1.4187</text>
<path d="M647.5,101 h10 l-5,5 z" fill="#778899" shape-rendering="auto"/>
<rect x="989" y="377" width="35" height="11" fill="#ffffff" />
<line x1="987" y1="383.5" x2="989" y2="383.5" stroke="#ffffff"/>
<text x="993" y="386" font-size="10" fill="#000" textLength="26" lengthAdjust="spacingAndGlyphs" >1.4187</text>
<rect x="8" y="481" width="2" height="1" fill="#000" />
<rect x="12" y="481" width="2" height="1" fill="#000" />
<rect x="9" y="482" width="4" height="1" fill="#000" />
<rect x="10" y="483" width="2" height="1" fill="#000" />
<rect x="9" y="484" width="4" height="1" fill="#000" />
<rect x="8" y="485" width="2" height="1" fill="#000" />
<rect x="12" y="485" width="2" height="1" fill="#000" />
<rect x="5" y="492" width="13" height="226" fill="url(#vg)" />
<text transform="translate(16,715) rotate(-90)" font-size="11" fill="#fff" textLength="49" lengthAdjust="spacingAndGlyphs">Терминал</text>
<line x1="19" y1="478.5" x2="1025" y2="478.5" stroke="#808080"/>
<line x1="19.5" y1="478" x2="19.5" y2="717" stroke="#808080"/>
<line x1="1024.5" y1="478" x2="1024.5" y2="697" stroke="#808080"/>
<rect x="20" y="479" width="99" height="17" fill="#d4d0c8" />
<line x1="20" y1="479.5" x2="118" y2="479.5" stroke="#ffffff"/>
<line x1="20.5" y1="479" x2="20.5" y2="495" stroke="#ffffff"/>
<line x1="20" y1="495.5" x2="119" y2="495.5" stroke="#404040"/>
<line x1="118.5" y1="479" x2="118.5" y2="496" stroke="#404040"/>
<line x1="21" y1="494.5" x2="118" y2="494.5" stroke="#808080"/>
<line x1="117.5" y1="480" x2="117.5" y2="495" stroke="#808080"/>
<text x="26" y="492" font-size="11" fill="#000" textLength="33" lengthAdjust="spacingAndGlyphs" >Ордер</text>
<rect x="119" y="479" width="168" height="17" fill="#d4d0c8" />
<line x1="119" y1="479.5" x2="286" y2="479.5" stroke="#ffffff"/>
<line x1="119.5" y1="479" x2="119.5" y2="495" stroke="#ffffff"/>
<line x1="119" y1="495.5" x2="287" y2="495.5" stroke="#404040"/>
<line x1="286.5" y1="479" x2="286.5" y2="496" stroke="#404040"/>
<line x1="120" y1="494.5" x2="286" y2="494.5" stroke="#808080"/>
<line x1="285.5" y1="480" x2="285.5" y2="495" stroke="#808080"/>
<text x="280" y="492" font-size="11" fill="#000" text-anchor="end" >Время</text>
<rect x="287" y="479" width="68" height="17" fill="#d4d0c8" />
<line x1="287" y1="479.5" x2="354" y2="479.5" stroke="#ffffff"/>
<line x1="287.5" y1="479" x2="287.5" y2="495" stroke="#ffffff"/>
<line x1="287" y1="495.5" x2="355" y2="495.5" stroke="#404040"/>
<line x1="354.5" y1="479" x2="354.5" y2="496" stroke="#404040"/>
<line x1="288" y1="494.5" x2="354" y2="494.5" stroke="#808080"/>
<line x1="353.5" y1="480" x2="353.5" y2="495" stroke="#808080"/>
<text x="348" y="492" font-size="11" fill="#000" text-anchor="end" >Тип</text>
<rect x="355" y="479" width="53" height="17" fill="#d4d0c8" />
<line x1="355" y1="479.5" x2="407" y2="479.5" stroke="#ffffff"/>
<line x1="355.5" y1="479" x2="355.5" y2="495" stroke="#ffffff"/>
<line x1="355" y1="495.5" x2="408" y2="495.5" stroke="#404040"/>
<line x1="407.5" y1="479" x2="407.5" y2="496" stroke="#404040"/>
<line x1="356" y1="494.5" x2="407" y2="494.5" stroke="#808080"/>
<line x1="406.5" y1="480" x2="406.5" y2="495" stroke="#808080"/>
<text x="401" y="492" font-size="11" fill="#000" text-anchor="end" >Объём</text>
<rect x="408" y="479" width="68" height="17" fill="#d4d0c8" />
<line x1="408" y1="479.5" x2="475" y2="479.5" stroke="#ffffff"/>
<line x1="408.5" y1="479" x2="408.5" y2="495" stroke="#ffffff"/>
<line x1="408" y1="495.5" x2="476" y2="495.5" stroke="#404040"/>
<line x1="475.5" y1="479" x2="475.5" y2="496" stroke="#404040"/>
<line x1="409" y1="494.5" x2="475" y2="494.5" stroke="#808080"/>
<line x1="474.5" y1="480" x2="474.5" y2="495" stroke="#808080"/>
<text x="469" y="492" font-size="11" fill="#000" text-anchor="end" >Символ</text>
<rect x="476" y="479" width="76" height="17" fill="#d4d0c8" />
<line x1="476" y1="479.5" x2="551" y2="479.5" stroke="#ffffff"/>
<line x1="476.5" y1="479" x2="476.5" y2="495" stroke="#ffffff"/>
<line x1="476" y1="495.5" x2="552" y2="495.5" stroke="#404040"/>
<line x1="551.5" y1="479" x2="551.5" y2="496" stroke="#404040"/>
<line x1="477" y1="494.5" x2="551" y2="494.5" stroke="#808080"/>
<line x1="550.5" y1="480" x2="550.5" y2="495" stroke="#808080"/>
<text x="545" y="492" font-size="11" fill="#000" text-anchor="end" >Цена</text>
<rect x="552" y="479" width="76" height="17" fill="#d4d0c8" />
<line x1="552" y1="479.5" x2="627" y2="479.5" stroke="#ffffff"/>
<line x1="552.5" y1="479" x2="552.5" y2="495" stroke="#ffffff"/>
<line x1="552" y1="495.5" x2="628" y2="495.5" stroke="#404040"/>
<line x1="627.5" y1="479" x2="627.5" y2="496" stroke="#404040"/>
<line x1="553" y1="494.5" x2="627" y2="494.5" stroke="#808080"/>
<line x1="626.5" y1="480" x2="626.5" y2="495" stroke="#808080"/>
<text x="621" y="492" font-size="11" fill="#000" text-anchor="end" >S / L</text>
<rect x="628" y="479" width="76" height="17" fill="#d4d0c8" />
<line x1="628" y1="479.5" x2="703" y2="479.5" stroke="#ffffff"/>
<line x1="628.5" y1="479" x2="628.5" y2="495" stroke="#ffffff"/>
<line x1="628" y1="495.5" x2="704" y2="495.5" stroke="#404040"/>
<line x1="703.5" y1="479" x2="703.5" y2="496" stroke="#404040"/>
<line x1="629" y1="494.5" x2="703" y2="494.5" stroke="#808080"/>
<line x1="702.5" y1="480" x2="702.5" y2="495" stroke="#808080"/>
<text x="697" y="492" font-size="11" fill="#000" text-anchor="end" >T / P</text>
<rect x="704" y="479" width="76" height="17" fill="#d4d0c8" />
<line x1="704" y1="479.5" x2="779" y2="479.5" stroke="#ffffff"/>
<line x1="704.5" y1="479" x2="704.5" y2="495" stroke="#ffffff"/>
<line x1="704" y1="495.5" x2="780" y2="495.5" stroke="#404040"/>
<line x1="779.5" y1="479" x2="779.5" y2="496" stroke="#404040"/>
<line x1="705" y1="494.5" x2="779" y2="494.5" stroke="#808080"/>
<line x1="778.5" y1="480" x2="778.5" y2="495" stroke="#808080"/>
<text x="773" y="492" font-size="11" fill="#000" text-anchor="end" >Цена</text>
<rect x="780" y="479" width="76" height="17" fill="#d4d0c8" />
<line x1="780" y1="479.5" x2="855" y2="479.5" stroke="#ffffff"/>
<line x1="780.5" y1="479" x2="780.5" y2="495" stroke="#ffffff"/>
<line x1="780" y1="495.5" x2="856" y2="495.5" stroke="#404040"/>
<line x1="855.5" y1="479" x2="855.5" y2="496" stroke="#404040"/>
<line x1="781" y1="494.5" x2="855" y2="494.5" stroke="#808080"/>
<line x1="854.5" y1="480" x2="854.5" y2="495" stroke="#808080"/>
<text x="849" y="492" font-size="11" fill="#000" text-anchor="end" >Комиссия</text>
<rect x="856" y="479" width="76" height="17" fill="#d4d0c8" />
<line x1="856" y1="479.5" x2="931" y2="479.5" stroke="#ffffff"/>
<line x1="856.5" y1="479" x2="856.5" y2="495" stroke="#ffffff"/>
<line x1="856" y1="495.5" x2="932" y2="495.5" stroke="#404040"/>
<line x1="931.5" y1="479" x2="931.5" y2="496" stroke="#404040"/>
<line x1="857" y1="494.5" x2="931" y2="494.5" stroke="#808080"/>
<line x1="930.5" y1="480" x2="930.5" y2="495" stroke="#808080"/>
<text x="925" y="492" font-size="11" fill="#000" text-anchor="end" >Своп</text>
<rect x="932" y="479" width="92" height="17" fill="#d4d0c8" />
<line x1="932" y1="479.5" x2="1023" y2="479.5" stroke="#ffffff"/>
<line x1="932.5" y1="479" x2="932.5" y2="495" stroke="#ffffff"/>
<line x1="932" y1="495.5" x2="1024" y2="495.5" stroke="#404040"/>
<line x1="1023.5" y1="479" x2="1023.5" y2="496" stroke="#404040"/>
<line x1="933" y1="494.5" x2="1023" y2="494.5" stroke="#808080"/>
<line x1="1022.5" y1="480" x2="1022.5" y2="495" stroke="#808080"/>
<text x="1017" y="492" font-size="11" fill="#000" text-anchor="end" >Прибыль</text>
<path d="M71.5,490.5 l4,-6.5 4,6.5 z" fill="none" stroke="#fff" shape-rendering="auto"/>
<rect x="20" y="496" width="1004" height="20" fill="#ffffff" />
<g shape-rendering="auto"><path d="M24.5,499.5 h6.5 l3,3 v9 q0,1 -1,1 h-8.5 q-1,0 -1,-1 v-11 q0,-1 1,-1 z" fill="#f6f6f6" stroke="#5a5a5a"/><path d="M31,499.5 v3 h3" fill="none" stroke="#888"/>
<circle cx="33.4" cy="510.4" r="3.6" fill="#ee1010" stroke="#b00000" stroke-width="0.7"/><path d="M31.6,511 l2.4,-2.4" stroke="#ffd0d0" stroke-width="0.9"/>
</g>
<text x="45" y="510" font-size="11" fill="#000" textLength="47" lengthAdjust="spacingAndGlyphs" >74653991</text>
<text x="282" y="510" font-size="11" fill="#000" text-anchor="end" textLength="87.5" lengthAdjust="spacingAndGlyphs" >2011.06.15 21:00</text>
<text x="350" y="510" font-size="11" fill="#000" text-anchor="end" >sell</text>
<text x="403" y="510" font-size="11" fill="#000" text-anchor="end" >2.26</text>
<text x="471" y="510" font-size="11" fill="#000" text-anchor="end" >eurusd</text>
<text x="547" y="510" font-size="11" fill="#000" text-anchor="end" >1.4167</text>
<text x="623" y="510" font-size="11" fill="#000" text-anchor="end" >1.4454</text>
<text x="699" y="510" font-size="11" fill="#000" text-anchor="end" >1.4037</text>
<text x="775" y="510" font-size="11" fill="#000" text-anchor="end" >1.4189</text>
<text x="851" y="510" font-size="11" fill="#000" text-anchor="end" >0.00</text>
<text x="927" y="510" font-size="11" fill="#000" text-anchor="end" >-184.67</text>
<text x="1019" y="510" font-size="11" fill="#000" text-anchor="end" >-497.20</text>
<rect x="20" y="516" width="1004" height="20" fill="#ebebeb" />
<g shape-rendering="auto"><path d="M24.5,519.5 h6.5 l3,3 v9 q0,1 -1,1 h-8.5 q-1,0 -1,-1 v-11 q0,-1 1,-1 z" fill="#f6f6f6" stroke="#5a5a5a"/><path d="M31,519.5 v3 h3" fill="none" stroke="#888"/>
<circle cx="33.4" cy="530.4" r="3.6" fill="#ee1010" stroke="#b00000" stroke-width="0.7"/><path d="M31.6,531 l2.4,-2.4" stroke="#ffd0d0" stroke-width="0.9"/>
</g>
<text x="45" y="530" font-size="11" fill="#000" textLength="47" lengthAdjust="spacingAndGlyphs" >74848179</text>
<text x="282" y="530" font-size="11" fill="#000" text-anchor="end" textLength="87.5" lengthAdjust="spacingAndGlyphs" >2011.06.23 16:48</text>
<text x="350" y="530" font-size="11" fill="#000" text-anchor="end" >sell</text>
<text x="403" y="530" font-size="11" fill="#000" text-anchor="end" >2.56</text>
<text x="471" y="530" font-size="11" fill="#000" text-anchor="end" >eurusd</text>
<text x="547" y="530" font-size="11" fill="#000" text-anchor="end" >1.4126</text>
<text x="623" y="530" font-size="11" fill="#000" text-anchor="end" >1.4341</text>
<text x="699" y="530" font-size="11" fill="#000" text-anchor="end" >1.3806</text>
<text x="775" y="530" font-size="11" fill="#000" text-anchor="end" >1.4189</text>
<text x="851" y="530" font-size="11" fill="#000" text-anchor="end" >0.00</text>
<text x="927" y="530" font-size="11" fill="#000" text-anchor="end" >-31.23</text>
<text x="1019" y="530" font-size="11" fill="#000" text-anchor="end" >-1 612.80</text>
<rect x="20" y="536" width="1004" height="20" fill="#ffffff" />
<g shape-rendering="auto"><path d="M24.5,539.5 h6.5 l3,3 v9 q0,1 -1,1 h-8.5 q-1,0 -1,-1 v-11 q0,-1 1,-1 z" fill="#f6f6f6" stroke="#5a5a5a"/><path d="M31,539.5 v3 h3" fill="none" stroke="#888"/>
<circle cx="33.4" cy="550.4" r="3.6" fill="#ee1010" stroke="#b00000" stroke-width="0.7"/><path d="M31.6,551 l2.4,-2.4" stroke="#ffd0d0" stroke-width="0.9"/>
</g>
<text x="45" y="550" font-size="11" fill="#000" textLength="47" lengthAdjust="spacingAndGlyphs" >74929491</text>
<text x="282" y="550" font-size="11" fill="#000" text-anchor="end" textLength="87.5" lengthAdjust="spacingAndGlyphs" >2011.06.23 14:25</text>
<text x="350" y="550" font-size="11" fill="#000" text-anchor="end" >sell</text>
<text x="403" y="550" font-size="11" fill="#000" text-anchor="end" >2.56</text>
<text x="471" y="550" font-size="11" fill="#000" text-anchor="end" >eurusd</text>
<text x="547" y="550" font-size="11" fill="#000" text-anchor="end" >1.4189</text>
<text x="623" y="550" font-size="11" fill="#000" text-anchor="end" >1.4330</text>
<text x="699" y="550" font-size="11" fill="#000" text-anchor="end" >1.3932</text>
<text x="775" y="550" font-size="11" fill="#000" text-anchor="end" >1.4189</text>
<text x="851" y="550" font-size="11" fill="#000" text-anchor="end" >0.00</text>
<text x="927" y="550" font-size="11" fill="#000" text-anchor="end" >-31.23</text>
<text x="1019" y="550" font-size="11" fill="#000" text-anchor="end" >0.00</text>
<rect x="20" y="556" width="1004" height="20" fill="#ebebeb" />
<g shape-rendering="auto"><path d="M24.5,559.5 h6.5 l3,3 v9 q0,1 -1,1 h-8.5 q-1,0 -1,-1 v-11 q0,-1 1,-1 z" fill="#f6f6f6" stroke="#5a5a5a"/><path d="M31,559.5 v3 h3" fill="none" stroke="#888"/>
<circle cx="33.4" cy="570.4" r="3.6" fill="#ee1010" stroke="#b00000" stroke-width="0.7"/><path d="M31.6,571 l2.4,-2.4" stroke="#ffd0d0" stroke-width="0.9"/>
</g>
<text x="45" y="570" font-size="11" fill="#000" textLength="47" lengthAdjust="spacingAndGlyphs" >75014739</text>
<text x="282" y="570" font-size="11" fill="#000" text-anchor="end" textLength="87.5" lengthAdjust="spacingAndGlyphs" >2011.06.23 03:02</text>
<text x="350" y="570" font-size="11" fill="#000" text-anchor="end" >sell</text>
<text x="403" y="570" font-size="11" fill="#000" text-anchor="end" >2.66</text>
<text x="471" y="570" font-size="11" fill="#000" text-anchor="end" >eurusd</text>
<text x="547" y="570" font-size="11" fill="#000" text-anchor="end" >1.4304</text>
<text x="623" y="570" font-size="11" fill="#000" text-anchor="end" >1.4436</text>
<text x="699" y="570" font-size="11" fill="#000" text-anchor="end" >1.4059</text>
<text x="775" y="570" font-size="11" fill="#000" text-anchor="end" >1.4189</text>
<text x="851" y="570" font-size="11" fill="#000" text-anchor="end" >0.00</text>
<text x="927" y="570" font-size="11" fill="#000" text-anchor="end" >-32.45</text>
<text x="1019" y="570" font-size="11" fill="#000" text-anchor="end" >3 059.00</text>
<rect x="20" y="576" width="1004" height="20" fill="#ffffff" />
<g shape-rendering="auto"><path d="M24.5,579.5 h6.5 l3,3 v9 q0,1 -1,1 h-8.5 q-1,0 -1,-1 v-11 q0,-1 1,-1 z" fill="#f6f6f6" stroke="#5a5a5a"/><path d="M31,579.5 v3 h3" fill="none" stroke="#888"/>
<circle cx="33.4" cy="590.4" r="3.6" fill="#ee1010" stroke="#b00000" stroke-width="0.7"/><path d="M31.6,591 l2.4,-2.4" stroke="#ffd0d0" stroke-width="0.9"/>
</g>
<text x="45" y="590" font-size="11" fill="#000" textLength="47" lengthAdjust="spacingAndGlyphs" >75222257</text>
<text x="282" y="590" font-size="11" fill="#000" text-anchor="end" textLength="87.5" lengthAdjust="spacingAndGlyphs" >2011.06.23 20:47</text>
<text x="350" y="590" font-size="11" fill="#000" text-anchor="end" >sell</text>
<text x="403" y="590" font-size="11" fill="#000" text-anchor="end" >2.44</text>
<text x="471" y="590" font-size="11" fill="#000" text-anchor="end" >eurusd</text>
<text x="547" y="590" font-size="11" fill="#000" text-anchor="end" >1.4168</text>
<text x="623" y="590" font-size="11" fill="#000" text-anchor="end" >1.4341</text>
<text x="699" y="590" font-size="11" fill="#000" text-anchor="end" >1.4038</text>
<text x="775" y="590" font-size="11" fill="#000" text-anchor="end" >1.4189</text>
<text x="851" y="590" font-size="11" fill="#000" text-anchor="end" >0.00</text>
<text x="927" y="590" font-size="11" fill="#000" text-anchor="end" >-29.77</text>
<text x="1019" y="590" font-size="11" fill="#000" text-anchor="end" >-512.40</text>
<rect x="20" y="596" width="1004" height="20" fill="#ebebeb" />
<g shape-rendering="auto"><path d="M24.5,599.5 h6.5 l3,3 v9 q0,1 -1,1 h-8.5 q-1,0 -1,-1 v-11 q0,-1 1,-1 z" fill="#f6f6f6" stroke="#5a5a5a"/><path d="M31,599.5 v3 h3" fill="none" stroke="#888"/>
<circle cx="33.4" cy="610.4" r="3.6" fill="#ee1010" stroke="#b00000" stroke-width="0.7"/><path d="M31.6,611 l2.4,-2.4" stroke="#ffd0d0" stroke-width="0.9"/>
</g>
<text x="45" y="610" font-size="11" fill="#000" textLength="47" lengthAdjust="spacingAndGlyphs" >75305995</text>
<text x="282" y="610" font-size="11" fill="#000" text-anchor="end" textLength="87.5" lengthAdjust="spacingAndGlyphs" >2011.06.24 21:00</text>
<text x="350" y="610" font-size="11" fill="#000" text-anchor="end" >sell</text>
<text x="403" y="610" font-size="11" fill="#000" text-anchor="end" >1.78</text>
<text x="471" y="610" font-size="11" fill="#000" text-anchor="end" >eurusd</text>
<text x="547" y="610" font-size="11" fill="#000" text-anchor="end" >1.4173</text>
<text x="623" y="610" font-size="11" fill="#000" text-anchor="end" >1.4308</text>
<text x="699" y="610" font-size="11" fill="#000" text-anchor="end" >1.4043</text>
<text x="775" y="610" font-size="11" fill="#000" text-anchor="end" >1.4189</text>
<text x="851" y="610" font-size="11" fill="#000" text-anchor="end" >0.00</text>
<text x="927" y="610" font-size="11" fill="#000" text-anchor="end" >-10.36</text>
<text x="1019" y="610" font-size="11" fill="#000" text-anchor="end" >-284.80</text>
<rect x="20" y="616" width="1004" height="20" fill="#c8c8c8" />
<g shape-rendering="auto"><rect x="24" y="620" width="11" height="12.5" rx="1" fill="#000" opacity="0.12"/><rect x="23.6" y="619.6" width="10.6" height="12.4" rx="1" fill="#fafafa" stroke="#555" stroke-width="1.2"/><path d="M27.5,623.5 h3 v3 h2.6 l-4.1,3.6 -4.1,-3.6 h2.6 z" fill="#ee1010" stroke="#901010" stroke-width="0.8"/></g>
<text x="44" y="630" font-size="11" fill="#000" font-weight="bold" textLength="102" lengthAdjust="spacingAndGlyphs" >Баланс: 89 373.92</text>
<text x="153" y="630" font-size="11" fill="#000" font-weight="bold" textLength="86.5" lengthAdjust="spacingAndGlyphs" >Кредит: 146.00</text>
<text x="246" y="630" font-size="11" fill="#000" font-weight="bold" textLength="116" lengthAdjust="spacingAndGlyphs" >Средства: 89 352.01</text>
<text x="369" y="630" font-size="11" fill="#000" font-weight="bold" textLength="95" lengthAdjust="spacingAndGlyphs" >Залог: 20 235.03</text>
<text x="471" y="630" font-size="11" fill="#000" font-weight="bold" textLength="118" lengthAdjust="spacingAndGlyphs" >Свободно: 69 116.98</text>
<text x="596" y="630" font-size="11" fill="#000" font-weight="bold" textLength="106" lengthAdjust="spacingAndGlyphs" >Уровень: 441.57%</text>
<text x="1019" y="630" font-size="11" fill="#000" text-anchor="end" font-weight="bold" textLength="42" lengthAdjust="spacingAndGlyphs" >-167.91</text>
<rect x="20" y="636" width="1004" height="20" fill="#ebebeb" />
<g shape-rendering="auto"><path d="M24.5,639.5 h6.5 l3,3 v9 q0,1 -1,1 h-8.5 q-1,0 -1,-1 v-11 q0,-1 1,-1 z" fill="#f6f6f6" stroke="#5a5a5a"/><path d="M31,639.5 v3 h3" fill="none" stroke="#888"/>
<circle cx="33.4" cy="650.4" r="3.6" fill="#4a8ae8" stroke="#1a4aa0" stroke-width="0.7"/><path d="M31.6,651 l2.4,-2.4" stroke="#d8e8ff" stroke-width="0.9"/>
</g>
<text x="45" y="650" font-size="11" fill="#000" textLength="47" lengthAdjust="spacingAndGlyphs" >74654401</text>
<text x="282" y="650" font-size="11" fill="#000" text-anchor="end" textLength="87.5" lengthAdjust="spacingAndGlyphs" >2011.06.15 21:01</text>
<text x="350" y="650" font-size="11" fill="#000" text-anchor="end" >buy stop</text>
<text x="403" y="650" font-size="11" fill="#000" text-anchor="end" >2.26</text>
<text x="471" y="650" font-size="11" fill="#000" text-anchor="end" >eurusd</text>
<text x="547" y="650" font-size="11" fill="#000" text-anchor="end" >1.4454</text>
<text x="623" y="650" font-size="11" fill="#000" text-anchor="end" >1.4155</text>
<text x="699" y="650" font-size="11" fill="#000" text-anchor="end" >1.4871</text>
<text x="775" y="650" font-size="11" fill="#000" text-anchor="end" >1.4189</text>
<rect x="20" y="656" width="1004" height="20" fill="#ffffff" />
<g shape-rendering="auto"><path d="M24.5,659.5 h6.5 l3,3 v9 q0,1 -1,1 h-8.5 q-1,0 -1,-1 v-11 q0,-1 1,-1 z" fill="#f6f6f6" stroke="#5a5a5a"/><path d="M31,659.5 v3 h3" fill="none" stroke="#888"/>
<circle cx="33.4" cy="670.4" r="3.6" fill="#4a8ae8" stroke="#1a4aa0" stroke-width="0.7"/><path d="M31.6,671 l2.4,-2.4" stroke="#d8e8ff" stroke-width="0.9"/>
</g>
<text x="45" y="670" font-size="11" fill="#000" textLength="47" lengthAdjust="spacingAndGlyphs" >75222345</text>
<text x="282" y="670" font-size="11" fill="#000" text-anchor="end" textLength="87.5" lengthAdjust="spacingAndGlyphs" >2011.06.23 20:49</text>
<text x="350" y="670" font-size="11" fill="#000" text-anchor="end" >buy stop</text>
<text x="403" y="670" font-size="11" fill="#000" text-anchor="end" >2.44</text>
<text x="471" y="670" font-size="11" fill="#000" text-anchor="end" >eurusd</text>
<text x="547" y="670" font-size="11" fill="#000" text-anchor="end" >1.4341</text>
<text x="623" y="670" font-size="11" fill="#000" text-anchor="end" >1.4125</text>
<text x="699" y="670" font-size="11" fill="#000" text-anchor="end" >1.4644</text>
<text x="775" y="670" font-size="11" fill="#000" text-anchor="end" >1.4189</text>
<rect x="20" y="676" width="1004" height="20" fill="#ebebeb" />
<g shape-rendering="auto"><path d="M24.5,679.5 h6.5 l3,3 v9 q0,1 -1,1 h-8.5 q-1,0 -1,-1 v-11 q0,-1 1,-1 z" fill="#f6f6f6" stroke="#5a5a5a"/><path d="M31,679.5 v3 h3" fill="none" stroke="#888"/>
<circle cx="33.4" cy="690.4" r="3.6" fill="#4a8ae8" stroke="#1a4aa0" stroke-width="0.7"/><path d="M31.6,691 l2.4,-2.4" stroke="#d8e8ff" stroke-width="0.9"/>
</g>
<text x="45" y="690" font-size="11" fill="#000" textLength="47" lengthAdjust="spacingAndGlyphs" >75306109</text>
<text x="282" y="690" font-size="11" fill="#000" text-anchor="end" textLength="87.5" lengthAdjust="spacingAndGlyphs" >2011.06.24 21:02</text>
<text x="350" y="690" font-size="11" fill="#000" text-anchor="end" >buy stop</text>
<text x="403" y="690" font-size="11" fill="#000" text-anchor="end" >1.78</text>
<text x="471" y="690" font-size="11" fill="#000" text-anchor="end" >eurusd</text>
<text x="547" y="690" font-size="11" fill="#000" text-anchor="end" >1.4308</text>
<text x="623" y="690" font-size="11" fill="#000" text-anchor="end" >1.4140</text>
<text x="699" y="690" font-size="11" fill="#000" text-anchor="end" >1.4573</text>
<text x="775" y="690" font-size="11" fill="#000" text-anchor="end" >1.4189</text>
<rect x="20" y="696" width="1005" height="21" fill="#d4d0c8" />
<line x1="88" y1="697.5" x2="1024" y2="697.5" stroke="#000"/>
<rect x="23" y="697" width="65" height="17" fill="#ffffff" />
<line x1="22.5" y1="697" x2="22.5" y2="715" stroke="#000"/>
<line x1="22" y1="714.5" x2="89" y2="714.5" stroke="#000"/>
<line x1="88.5" y1="697" x2="88.5" y2="715" stroke="#000"/>
<line x1="19" y1="697.5" x2="23" y2="697.5" stroke="#000"/>
<text x="32" y="710" font-size="11" fill="#000" textLength="46.5" lengthAdjust="spacingAndGlyphs" >Торговля</text>
<text x="98" y="711" font-size="11" fill="#444" textLength="76" lengthAdjust="spacingAndGlyphs" >История Счета</text>
<text x="194" y="711" font-size="11" fill="#444" textLength="42" lengthAdjust="spacingAndGlyphs" >Новости</text>
<text x="256" y="711" font-size="11" fill="#444" textLength="45" lengthAdjust="spacingAndGlyphs" >Сигналы</text>
<text x="320" y="711" font-size="11" fill="#444" textLength="81" lengthAdjust="spacingAndGlyphs" >Почтовый ящик</text>
<text x="422" y="711" font-size="11" fill="#444" textLength="40" lengthAdjust="spacingAndGlyphs" >Журнал</text>
<line x1="185.5" y1="701" x2="185.5" y2="713" stroke="#444"/>
<line x1="247.5" y1="701" x2="247.5" y2="713" stroke="#444"/>
<line x1="311.5" y1="701" x2="311.5" y2="713" stroke="#444"/>
<line x1="412.5" y1="701" x2="412.5" y2="713" stroke="#444"/>
<line x1="472.5" y1="701" x2="472.5" y2="713" stroke="#444"/>
<line x1="1025.5" y1="478" x2="1025.5" y2="718" stroke="#ffffff"/>
<line x1="4" y1="718.5" x2="1028" y2="718.5" stroke="#ffffff"/>
<line x1="4" y1="720.5" x2="1028" y2="720.5" stroke="#808080"/>
<line x1="4" y1="721.5" x2="1028" y2="721.5" stroke="#ffffff"/>
<text x="6" y="737" font-size="11" fill="#000" textLength="128" lengthAdjust="spacingAndGlyphs" >Для справки, нажмите F1</text>
<line x1="307.5" y1="725" x2="307.5" y2="741" stroke="#808080"/>
<line x1="308.5" y1="725" x2="308.5" y2="741" stroke="#ffffff"/>
<line x1="416.5" y1="725" x2="416.5" y2="741" stroke="#808080"/>
<line x1="417.5" y1="725" x2="417.5" y2="741" stroke="#ffffff"/>
<line x1="517.5" y1="725" x2="517.5" y2="741" stroke="#808080"/>
<line x1="518.5" y1="725" x2="518.5" y2="741" stroke="#ffffff"/>
<line x1="590.5" y1="725" x2="590.5" y2="741" stroke="#808080"/>
<line x1="591.5" y1="725" x2="591.5" y2="741" stroke="#ffffff"/>
<line x1="660.5" y1="725" x2="660.5" y2="741" stroke="#808080"/>
<line x1="661.5" y1="725" x2="661.5" y2="741" stroke="#ffffff"/>
<line x1="730.5" y1="725" x2="730.5" y2="741" stroke="#808080"/>
<line x1="731.5" y1="725" x2="731.5" y2="741" stroke="#ffffff"/>
<line x1="801.5" y1="725" x2="801.5" y2="741" stroke="#808080"/>
<line x1="802.5" y1="725" x2="802.5" y2="741" stroke="#ffffff"/>
<line x1="866.5" y1="725" x2="866.5" y2="741" stroke="#808080"/>
<line x1="867.5" y1="725" x2="867.5" y2="741" stroke="#ffffff"/>
<text x="313" y="737" font-size="11" fill="#000" textLength="34.5" lengthAdjust="spacingAndGlyphs" >Default</text>
<g>
<rect x="872" y="727" width="2" height="9" fill="#5a7a10" />
<rect x="872" y="736" width="2" height="3" fill="#0a3a6a" />
<rect x="875" y="727" width="2" height="8" fill="#5a7a10" />
<rect x="875" y="735" width="2" height="4" fill="#0a3a6a" />
<rect x="878" y="727" width="2" height="7" fill="#5a7a10" />
<rect x="878" y="734" width="2" height="5" fill="#0a3a6a" />
<rect x="881" y="727" width="2" height="6" fill="#5a7a10" />
<rect x="881" y="733" width="2" height="6" fill="#0a3a6a" />
<rect x="884" y="727" width="2" height="5" fill="#5a7a10" />
<rect x="884" y="732" width="2" height="7" fill="#0a3a6a" />
<rect x="887" y="727" width="2" height="4" fill="#5a7a10" />
<rect x="887" y="731" width="2" height="8" fill="#0a3a6a" />
<rect x="890" y="727" width="2" height="3" fill="#5a7a10" />
<rect x="890" y="730" width="2" height="9" fill="#0a3a6a" />
<rect x="893" y="727" width="2" height="2" fill="#5a7a10" />
<rect x="893" y="729" width="2" height="10" fill="#0a3a6a" />
</g>
<text x="927" y="737" font-size="11" fill="#000" textLength="35" lengthAdjust="spacingAndGlyphs" >27/1 kb</text>
<g shape-rendering="auto">
<path d="M1011.5,742 L1028,725.5" stroke="#fff" stroke-width="1"/><path d="M1013,742 L1028,727" stroke="#808080" stroke-width="1.7"/>
<path d="M1015.5,742 L1028,729.5" stroke="#fff" stroke-width="1"/><path d="M1017,742 L1028,731" stroke="#808080" stroke-width="1.7"/>
<path d="M1019.5,742 L1028,733.5" stroke="#fff" stroke-width="1"/><path d="M1021,742 L1028,735" stroke="#808080" stroke-width="1.7"/>
<path d="M1023.5,742 L1028,737.5" stroke="#fff" stroke-width="1"/><path d="M1025,742 L1028,739" stroke="#808080" stroke-width="1.7"/>
</g>
<rect x="4" y="742" width="1024" height="1" fill="#d4d0c8" />
<line x1="4" y1="743.5" x2="1028" y2="743.5" stroke="#ffffff"/>
</svg></body></html>
